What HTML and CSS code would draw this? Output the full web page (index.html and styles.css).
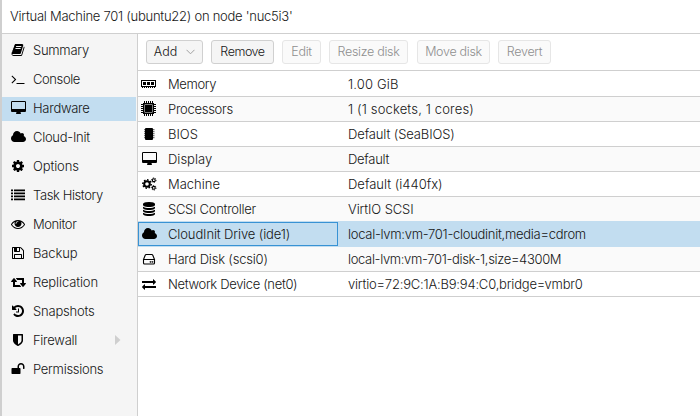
FILE: index.html
```
<!DOCTYPE html>
<html lang="en">
<head>
<meta charset="utf-8">
<title>Virtual Machine 701</title>
<link rel="stylesheet" href="styles.css">
</head>
<body>
<div class="app">
  <header class="title"><span>Virtual Machine 701 (ubuntu22) on node 'nuc5i3'</span></header>
  <div class="body">
    <nav class="side">
      <a class="nav"><svg class="ic" viewBox="0 0 1792 1792"><path d="M1703 478q40 57 18 129l-275 906q-19 64-76.500 107.500t-122.500 43.500h-923q-77 0-148.500-53.500t-99.500-131.500q-24-67-2-127 0-4 3-27t4-37q1-8-3-21.500t-3-19.500q2-11 8-21t16.500-23.500 16.500-23.500q23-38 45-91.500t30-91.500q3-10 .5-30t-.5-28q3-11 17-28t17-23q21-36 42-92t25-90q1-9-2.500-32t.5-28q4-13 22-30.500t22-22.500q19-26 42.500-84.500t27.500-96.500q1-8-3-25.500t-2-26.500q2-8 9-18t18-23 17-21q8-12 16.500-30.500t15-35 16-36 19.500-32 26.500-23.500 36-11.500 47.500 5.500l-1 3q38-9 51-9h761q74 0 114 56t18 130l-274 906q-36 119-71.500 153.500t-128.500 34.500h-869q-27 0-38 15-11 16-1 43 24 70 144 70h923q29 0 56-15.500t35-41.500l300-987q7-22 5-57 38 15 59 43zm-1064 2q-4 13 2 22.500t20 9.500h608q13 0 25.500-9.500t16.500-22.500l21-64q4-13-2-22.500t-20-9.500h-608q-13 0-25.500 9.500t-16.500 22.500zm-83 256q-4 13 2 22.500t20 9.500h608q13 0 25.500-9.500t16.500-22.500l21-64q4-13-2-22.500t-20-9.500h-608q-13 0-25.500 9.500t-16.500 22.500z"/></svg><span class="tight-3">Summary</span></a>
      <a class="nav"><svg class="ic" viewBox="0 0 1792 1792"><path d="M649 983l-466 466q-10 10-23 10t-23-10l-50-50q-10-10-10-23t10-23l393-393-393-393q-10-10-10-23t10-23l50-50q10-10 23-10t23 10l466 466q10 10 10 23t-10 23zm1079 457v64q0 14-9 23t-23 9h-960q-14 0-23-9t-9-23v-64q0-14 9-23t23-9h960q14 0 23 9t9 23z"/></svg><span class="tight-4">Console</span></a>
      <a class="nav active"><svg class="ic wide" viewBox="-64 0 1920 1792"><path d="M1728 992v-832q0-13-9.500-22.500t-22.500-9.500h-1600q-13 0-22.500 9.500t-9.500 22.500v832q0 13 9.500 22.500t22.500 9.500h1600q13 0 22.500-9.500t9.500-22.500zm128-832v1088q0 66-47 113t-113 47h-544q0 37 16 77.500t32 71 16 43.500q0 26-19 45t-45 19h-512q-26 0-45-19t-19-45q0-14 16-44t32-70 16-78h-544q-66 0-113-47t-47-113v-1088q0-66 47-113t113-47h1600q66 0 113 47t47 113z"/></svg><span class="tight-3">Hardware</span></a>
      <a class="nav"><svg class="ic wide" viewBox="64 0 1920 1792"><path d="M1984 1152q0 159-112.500 271.500t-271.500 112.500h-1088q-185 0-316.500-131.500t-131.500-316.500q0-132 71-241.500t187-163.500q-2-28-2-43 0-212 150-362t362-150q158 0 286.500 88t187.500 230q70-62 166-62 106 0 181 75t75 181q0 75-41 138 129 30 213 134.500t84 239.500z"/></svg><span class="tight-3">Cloud-Init</span></a>
      <a class="nav"><svg class="ic" viewBox="0 0 1792 1792"><path d="M1152 896q0-106-75-181t-181-75-181 75-75 181 75 181 181 75 181-75 75-181zm512-109v222q0 12-8 23t-20 13l-185 28q-19 54-39 91 35 50 107 138 10 12 10 25t-9 23q-27 37-99 108t-94 71q-12 0-26-9l-138-108q-44 23-91 38-16 136-29 186-7 28-36 28h-222q-14 0-24.500-8.500t-11.500-21.500l-28-184q-49-16-90-37l-141 107q-10 9-25 9-14 0-25-11-126-114-165-168-7-10-7-23 0-12 8-23 15-21 51-66.500t54-70.500q-27-50-41-99l-183-27q-13-2-21-12.500t-8-23.500v-222q0-12 8-23t19-13l186-28q14-46 39-92-40-57-107-138-10-12-10-24 0-10 9-23 26-36 98.500-107.500t94.500-71.500q13 0 26 10l138 107q44-23 91-38 16-136 29-186 7-28 36-28h222q14 0 24.500 8.500t11.500 21.500l28 184q49 16 90 37l142-107q9-9 24-9 13 0 25 10 129 119 165 170 7 8 7 22 0 12-8 23-15 21-51 66.500t-54 70.500q26 50 41 98l183 28q13 2 21 12.500t8 23.500z"/></svg><span class="tight-1">Options</span></a>
      <a class="nav"><svg class="ic" viewBox="0 0 14 14"><path d="M0 1.500h2v1.700H0zM3 1.500h11v1.700H3zM0 4.500h2v1.700H0zM3 4.500h11v1.700H3zM0 7.500h2v1.700H0zM3 7.500h11v1.700H3zM0 10.500h2v1.700H0zM3 10.500h11v1.700H3z"/></svg><span class="tight-4">Task History</span></a>
      <a class="nav"><svg class="ic" viewBox="0 0 1792 1792"><path d="M1664 960q-152-236-381-353 61 104 61 225 0 185-131.500 316.500t-316.500 131.500-316.500-131.500-131.500-316.500q0-121 61-225-229 117-381 353 133 205 333.500 326.500t434.500 121.500 434.500-121.500 333.500-326.500zm-720-384q0-20-14-34t-34-14q-125 0-214.500 89.500t-89.500 214.500q0 20 14 34t34 14 34-14 14-34q0-86 61-147t147-61q20 0 34-14t14-34zm848 384q0 34-20 69-140 230-376.500 368.500t-499.500 138.500-499.500-139-376.500-368q-20-35-20-69t20-69q140-229 376.500-368t499.500-139 499.500 139 376.500 368q20 35 20 69z"/></svg><span class="tight-4">Monitor</span></a>
      <a class="nav"><svg class="ic" viewBox="0 0 1792 1792"><path d="M512 1536h768v-384h-768v384zm896 0h128v-896q0-14-10-38.500t-20-34.500l-281-281q-10-10-34-20t-39-10v416q0 40-28 68t-68 28h-576q-40 0-68-28t-28-68v-416h-128v1280h128v-416q0-40 28-68t68-28h832q40 0 68 28t28 68v416zm-384-928v-320q0-13-9.500-22.500t-22.500-9.500h-192q-13 0-22.500 9.500t-9.500 22.500v320q0 13 9.500 22.500t22.500 9.500h192q13 0 22.500-9.500t9.500-22.500zm640 32v928q0 40-28 68t-68 28h-1344q-40 0-68-28t-28-68v-1344q0-40 28-68t68-28h928q40 0 88 20t76 48l280 280q28 28 48 76t20 88z"/></svg><span class="tight-1">Backup</span></a>
      <a class="nav"><svg class="ic wide" viewBox="-64 0 1920 1792"><path d="M1216 1504q0 13-9.500 22.500t-22.500 9.500h-960q-8 0-13.500-2t-9-7-5.500-8-3-11.500-1-11.500v-600h-192q-26 0-45-19t-19-45q0-24 15-41l320-384q19-22 49-22t49 22l320 384q15 17 15 41 0 26-19 45t-45 19h-192v384h576q16 0 25 11l160 192q7 10 7 21zm640-416q0 24-15 41l-320 384q-20 23-49 23t-49-23l-320-384q-15-17-15-41 0-26 19-45t45-19h192v-384h-576q-16 0-25-12l-160-192q-7-9-7-20 0-13 9.500-22.500t22.500-9.500h960q8 0 13.500 2t9 7 5.500 8 3 11.500 1 11.500v600h192q26 0 45 19t19 45z"/></svg><span class="tight-1">Replication</span></a>
      <a class="nav"><svg class="ic" viewBox="0 0 1792 1792"><path d="M1664 896q0 156-61 298t-164 245-245 164-298 61q-172 0-327-72.500t-264-204.500q-7-10-6.500-22.500t8.500-20.500l137-138q10-9 25-9 16 2 23 12 73 95 179 147t225 52q104 0 198.500-40.500t163.500-109.500 109.500-163.500 40.500-198.500-40.500-198.500-109.500-163.500-163.500-109.500-198.500-40.500q-98 0-188 35.500t-160 101.500l137 138q31 30 14 69-17 40-59 40h-448q-26 0-45-19t-19-45v-448q0-42 40-59 39-17 69 14l130 129q107-101 244.500-156.500t284.500-55.500q156 0 298 61t245 164 164 245 61 298zm-640-288v448q0 14-9 23t-23 9h-320q-14 0-23-9t-9-23v-64q0-14 9-23t23-9h224v-352q0-14 9-23t23-9h64q14 0 23 9t9 23z"/></svg><span class="tight-2">Snapshots</span></a>
      <a class="nav"><svg class="ic" viewBox="0 0 1792 1792"><path d="M1344 960v-640h-448v1137q119-63 213-137 235-184 235-360zm192-768v768q0 86-33.500 170.500t-83 150-118 127.500-126.500 103-121 77.500-89.500 49.500-42.500 20q-12 6-26 6t-26-6q-16-7-42.500-20t-89.500-49.500-121-77.500-126.500-103-118-127.500-83-150-33.500-170.500v-768q0-26 19-45t45-19h1152q26 0 45 19t19 45z"/></svg><span class="tight-3">Firewall</span><svg class="expand" viewBox="0 0 6 10"><path d="M0 0l5.500 5L0 10z"/></svg></a>
      <a class="nav"><svg class="ic" viewBox="0 0 1792 1792"><path d="M1728 576v256q0 26-19 45t-45 19h-64q-26 0-45-19t-19-45v-256q0-106-75-181t-181-75-181 75-75 181v192h96q40 0 68 28t28 68v576q0 40-28 68t-68 28h-960q-40 0-68-28t-28-68v-576q0-40 28-68t68-28h672v-192q0-185 131.500-316.500t316.500-131.500 316.500 131.500 131.500 316.500z"/></svg><span class="tight-3">Permissions</span></a>
    </nav>
    <main class="main">
      <div class="toolbar">
        <button class="btn b-add"><span>Add</span><svg class="chev" viewBox="0 0 9 6"><path d="M.5.8l4 4 4-4"/></svg></button>
        <button class="btn b-remove">Remove</button>
        <button class="btn b-edit" disabled>Edit</button>
        <button class="btn b-resize" disabled>Resize disk</button>
        <button class="btn b-move" disabled>Move disk</button>
        <button class="btn b-revert" disabled>Revert</button>
      </div>
      <div class="grid">
        <div class="row"><div class="key"><svg class="gi" viewBox="0 0 16 16"><path fill-rule="evenodd" d="M0 4h15v7h-1v1h-1v-1h-1v1h-1v-1h-1v1H9v-1H8v1H7v-1H6v1H5v-1H4v1H3v-1H2v1H1v-1H0zM1 5v5h13V5zM2 6h3v3H2zM6 6h3v3H6zM10 6h3v3h-3z"/></svg><span class="tight-4">Memory</span></div><div class="val"><span class="loose">1.00 GiB</span></div></div>
        <div class="row"><div class="key"><svg class="gi" viewBox="0 0 16 16"><path fill-rule="evenodd" d="M2 2h11v11H2zM3.500 3.500v8h8v-8zM4 4h7v7H4zM3 0h1v2H3zM5 0h1v2H5zM7 0h1v2H7zM9 0h1v2H9zM11 0h1v2h-1zM3 13h1v2H3zM5 13h1v2H5zM7 13h1v2H7zM9 13h1v2H9zM11 13h1v2h-1zM0 3h2v1H0zM0 5h2v1H0zM0 7h2v1H0zM0 9h2v1H0zM0 11h2v1H0zM13 3h2v1h-2zM13 5h2v1h-2zM13 7h2v1h-2zM13 9h2v1h-2zM13 11h2v1h-2z"/></svg><span class="tight-3">Processors</span></div><div class="val"><span class="loose">1 (1 sockets, 1 cores)</span></div></div>
        <div class="row"><div class="key"><svg class="gi" viewBox="0 0 16 16"><path d="M5 2h6q1 0 1 1v10q0 1-1 1H5q-1 0-1-1V3q0-1 1-1z"/><path class="dim" d="M3 3h1v1.300H3zM3 5h1v1.300H3zM3 7h1v1.300H3zM3 9h1v1.300H3zM3 11h1v1.300H3zM12 3h1.500v1.300H12zM12 5h1.500v1.300H12zM12 7h1.500v1.300H12zM12 9h1.500v1.300H12zM12 11h1.500v1.300H12z"/></svg><span>BIOS</span></div><div class="val"><span class="tight-1">Default (SeaBIOS)</span></div></div>
        <div class="row"><div class="key"><svg class="ic wide" viewBox="-64 0 1920 1792"><path d="M1728 992v-832q0-13-9.500-22.500t-22.500-9.500h-1600q-13 0-22.500 9.500t-9.500 22.500v832q0 13 9.500 22.500t22.500 9.500h1600q13 0 22.500-9.500t9.500-22.500zm128-832v1088q0 66-47 113t-113 47h-544q0 37 16 77.500t32 71 16 43.500q0 26-19 45t-45 19h-512q-26 0-45-19t-19-45q0-14 16-44t32-70 16-78h-544q-66 0-113-47t-47-113v-1088q0-66 47-113t113-47h1600q66 0 113 47t47 113z"/></svg><span>Display</span></div><div class="val"><span class="tight-3">Default</span></div></div>
        <div class="row"><div class="key"><svg class="ic wide gears" viewBox="0 0 15 14"><circle cx="5" cy="7" r="2.800" stroke-width="2"/><circle class="teeth" cx="5" cy="7" r="4.200" stroke-width="1.500" pathLength="16"/><circle cx="11.800" cy="3.200" r="1.400" stroke-width="1.100"/><circle class="teeth" cx="11.800" cy="3.200" r="2.250" stroke-width="1" pathLength="12"/><circle cx="11.800" cy="10.800" r="1.400" stroke-width="1.100"/><circle class="teeth" cx="11.800" cy="10.800" r="2.250" stroke-width="1" pathLength="12"/></svg><span>Machine</span></div><div class="val"><span>Default (i440fx)</span></div></div>
        <div class="row"><div class="key"><svg class="ic" viewBox="0 0 1792 1792"><path d="M896 768q237 0 443-43t325-127v170q0 69-103 128t-280 93.500-385 34.500-385-34.500-280-93.500-103-128v-170q119 84 325 127t443 43zm0 768q237 0 443-43t325-127v170q0 69-103 128t-280 93.500-385 34.500-385-34.500-280-93.500-103-128v-170q119 84 325 127t443 43zm0-384q237 0 443-43t325-127v170q0 69-103 128t-280 93.500-385 34.500-385-34.500-280-93.500-103-128v-170q119 84 325 127t443 43zm0-1152q208 0 385 34.500t280 93.500 103 128v128q0 69-103 128t-280 93.500-385 34.500-385-34.500-280-93.500-103-128v-128q0-69 103-128t280-93.500 385-34.500z"/></svg><span class="tight-3">SCSI Controller</span></div><div class="val"><span class="tight-1">VirtIO SCSI</span></div></div>
        <div class="row selected"><div class="key"><svg class="ic wide" viewBox="64 0 1920 1792"><path d="M1984 1152q0 159-112.500 271.500t-271.500 112.500h-1088q-185 0-316.500-131.500t-131.500-316.500q0-132 71-241.500t187-163.500q-2-28-2-43 0-212 150-362t362-150q158 0 286.500 88t187.500 230q70-62 166-62 106 0 181 75t75 181q0 75-41 138 129 30 213 134.500t84 239.500z"/></svg><span class="tight-1">CloudInit Drive (ide1)</span></div><div class="val"><span class="tight-3">local-lvm:vm-701-cloudinit,media=cdrom</span></div></div>
        <div class="row"><div class="key"><svg class="ic disk" viewBox="0 0 14 14"><path d="M1.500 7.500h11V11q0 1-1 1h-9q-1 0-1-1zM1.500 7.500l1.700-4.300q.3-.7 1-.7h5.600q.7 0 1 .7l1.700 4.300"/><circle cx="8.500" cy="9.800" r=".35"/><circle cx="10.500" cy="9.800" r=".35"/></svg><span class="tight-2">Hard Disk (scsi0)</span></div><div class="val"><span class="tight-35">local-lvm:vm-701-disk-1,size=4300M</span></div></div>
        <div class="row"><div class="key"><svg class="ic" viewBox="0 0 1792 1792"><path d="M1792 1184v192q0 13-9.500 22.500t-22.500 9.500h-1376v192q0 13-9.500 22.500t-22.500 9.500q-12 0-24-10l-319-320q-9-9-9-22 0-14 9-23l320-320q9-9 23-9 13 0 22.500 9.500t9.500 22.500v192h1376q13 0 22.500 9.500t9.500 22.500zm0-544q0 14-9 23l-320 320q-9 9-23 9-13 0-22.500-9.500t-9.500-22.500v-192h-1376q-13 0-22.500-9.500t-9.500-22.500v-192q0-13 9.500-22.500t22.500-9.500h1376v-192q0-14 9-23t23-9q12 0 24 10l319 319q9 9 9 23z"/></svg><span class="tight-35">Network Device (net0)</span></div><div class="val"><span class="tight-2">virtio=72:9C:1A:B9:94:C0,bridge=vmbr0</span></div></div>
      </div>
    </main>
  </div>
</div>
</body>
</html>
```
FILE: styles.css
```
* { box-sizing: border-box; }
body {
  margin: 0;
  background: #fff;
  color: #161616;
  font: 300 13px/16px Inter, "Liberation Sans", sans-serif;
  overflow: hidden;
}
.app {
  height: 416px;
  display: flex;
  flex-direction: column;
  border-left: 2px solid #cfcfcf;
  white-space: nowrap;
}
.title {
  height: 34px;
  padding: 8px 0 0 8px;
  border-bottom: 1px solid #cfcfcf;
  letter-spacing: -.26px;
}
.body { flex: 1; display: flex; }
.side {
  width: 136px;
  padding-top: 5px;
  background: #f5f5f5;
  border-right: 1px solid #cfcfcf;
}
.nav {
  display: flex;
  align-items: center;
  height: 24px;
  margin: 0 1px 5px 0;
  padding: 0 0 2px 9px;
}
.nav.active { background: #c2ddf0; }
.nav > span { margin-left: 8px; }
.tight-1 { letter-spacing: -.12px; }
.tight-2 { letter-spacing: -.2px; }
.tight-3 { letter-spacing: -.28px; }
.tight-35 { letter-spacing: -.34px; }
.tight-4 { letter-spacing: -.4px; }
.loose { letter-spacing: .15px; }
.ic { width: 14px; height: 14px; flex: none; fill: #000; }
.ic.wide { width: 15px; margin-right: -1px; }
.expand { width: 6px; height: 10px; margin: 0 15px 0 auto; fill: #cfcfcf; }
.main { flex: 1; min-width: 0; }
.toolbar {
  height: 37px;
  display: flex;
  padding: 6px 0 0 8px;
  border-bottom: 1px solid #cfcfcf;
}
.btn {
  height: 24px;
  display: flex;
  align-items: center;
  justify-content: center;
  padding: 0;
  margin: 0 8px 0 0;
  background: #f5f5f5;
  border: 1px solid #d0d0d0;
  border-radius: 3px;
  color: inherit;
  font: inherit;
  font-size: 12.5px;
  letter-spacing: -.3px;
}
.btn:disabled { background: #fafafa; border-color: #e6e6e6; color: #8f8f8f; }
.chev { width: 9px; height: 6px; margin-left: 9px; fill: none; stroke: #a0a0a0; }
.b-add { width: 57px; letter-spacing: 0; }
.b-remove { width: 63px; letter-spacing: -.45px; }
.b-edit { width: 39px; }
.b-resize { width: 79px; margin-right: 9px; }
.b-move { width: 73px; }
.b-revert { width: 53px; }
.row {
  display: flex;
  height: 25px;
  border-bottom: 1px solid #cfcfcf;
}
.row:first-child { height: 26px; }
.row:nth-child(even) { background: #fafafa; }
.row:nth-child(6) { border-color: #c2ddf0; }
.row.selected { background: #c2ddf0; border-color: #c2ddf0; }
.row.selected + .row { background: #fafafa; }
.key, .val { display: flex; align-items: center; }
.key { width: 200px; padding-left: 4px; }
.key .ic + span { margin-left: 12px; }
.gi { width: 16px; height: 16px; margin-left: -1px; flex: none; }
.gi + span { margin-left: 11px; }
.dim { opacity: .55; }
.val { padding-left: 10px; }
.gears { fill: none; stroke: #000; }
.teeth { stroke-dasharray: 1 1; }
.disk { fill: none; stroke: #000; stroke-width: 1.1; }
.selected .key { border: 1px solid #3892d4; padding-left: 3px; }
```
